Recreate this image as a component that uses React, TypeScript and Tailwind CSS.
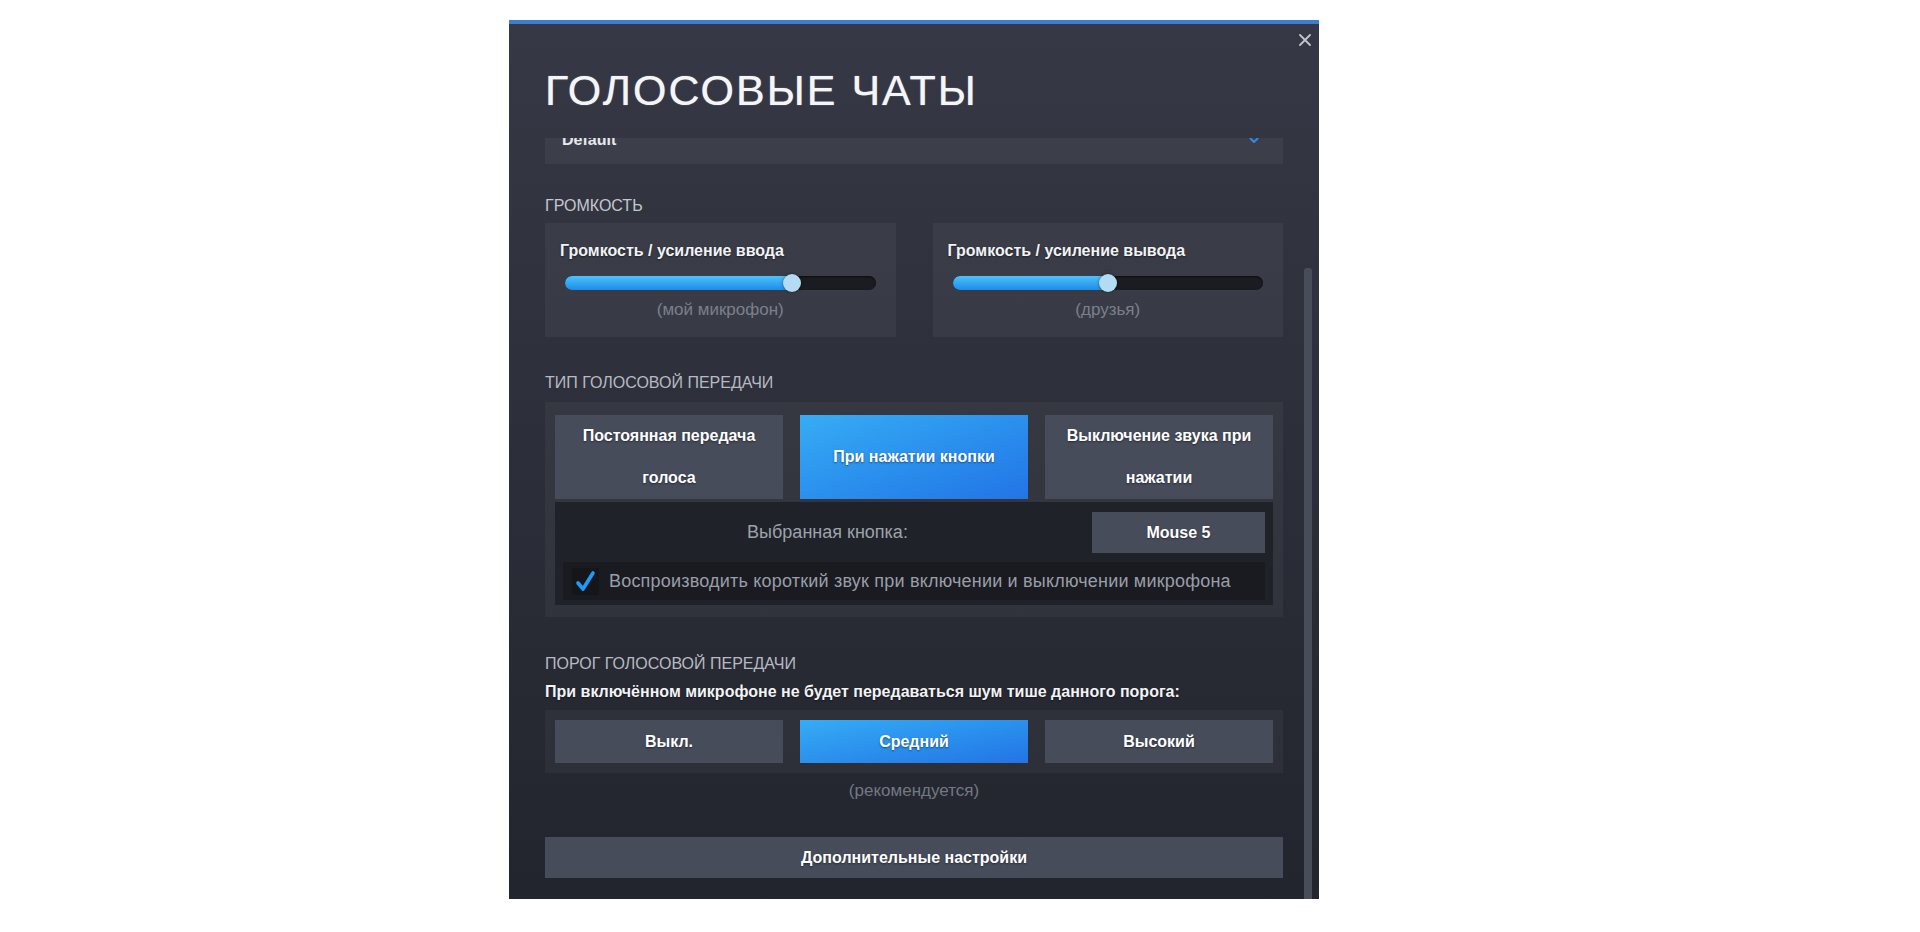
import React from "react";

const FONT = { fontFamily: '"Liberation Sans", Arial, sans-serif' };

function Slider({ value }: { value: number }) {
  return (
    <div className="relative mx-[5px] mt-[13px] h-[18px] flex items-center">
      <div className="relative h-[14px] w-full rounded-full bg-[#1a1c21] shadow-[inset_0_1px_2px_rgba(0,0,0,0.6)]">
        <div
          className="h-full rounded-full bg-linear-to-b from-[#4cc2fb] to-[#1f8be9]"
          style={{ width: `${value}%` }}
        />
      </div>
      <div
        className="absolute top-0 h-[18px] w-[18px] -translate-x-1/2 rounded-full bg-[#b3dbf4] shadow-[0_0_3px_rgba(0,0,0,0.5)]"
        style={{ left: `${value}%` }}
      />
    </div>
  );
}

function VolumeBox({ label, sub, value }: { label: string; sub: string; value: number }) {
  return (
    <div className="h-[114px] bg-[#ffffff0c] px-[15px] pt-[18px]">
      <div className="text-[16px] leading-[20px] font-bold text-[#f2f3f5] [text-shadow:0_1px_2px_rgba(0,0,0,0.5)]">{label}</div>
      <Slider value={value} />
      <div className="mt-[8px] text-center text-[17px] leading-[20px] text-[#7b808c]">{sub}</div>
    </div>
  );
}

function Btn({
  children,
  active,
  className,
}: {
  children: React.ReactNode;
  active?: boolean;
  className?: string;
}) {
  return (
    <div
      className={
        "flex items-center justify-center text-center font-bold text-[16px] text-white [text-shadow:0_1px_2px_rgba(0,0,0,0.45)] " +
        (active
          ? "bg-linear-to-br from-[#37acf4] to-[#2374e6] "
          : "bg-[#474c5b] ") +
        (className ?? "")
      }
    >
      {children}
    </div>
  );
}

export default function App() {
  return (
    <div className="w-[1920px] h-[932px] overflow-hidden bg-white" style={FONT}>
      <div className="relative ml-[509px] mt-[20px] h-[879px] w-[810px] overflow-hidden border-t-4 border-[#3b7fd3] bg-linear-to-b from-[#363945] to-[#22252d]">
        {/* close */}
        <div className="absolute right-[8px] top-[10px] h-[12px] w-[12px]">
          <svg viewBox="0 0 12 12" width="12" height="12">
            <path d="M1 1 L11 11 M11 1 L1 11" stroke="#c2c5cd" strokeWidth="1.8" strokeLinecap="round" />
          </svg>
        </div>
        {/* scrollbar */}
        <div className="absolute right-[7px] top-[244px] bottom-0 w-[8px] rounded-t-[3px] bg-[#484d5a]" />

        <div className="px-[36px] pt-[44px]">
          <div className="text-[43px] leading-[44px] tracking-[2px] text-[#f4f5f7] [text-shadow:0_0_1px_rgba(255,255,255,0.7)]">
            ГОЛОСОВЫЕ ЧАТЫ
          </div>
        </div>

        <div className="mt-[26px] h-[761px] overflow-hidden px-[36px]">
          <div className="-mt-[20px]">
            {/* dropdown */}
            <div className="relative flex h-[46px] items-start justify-between bg-[#ffffff0c] pl-[17px] pr-[24px]">
              <span className="text-[16px] leading-[43px] font-bold text-[#e8e9ec]">Default</span>
              <svg viewBox="0 0 10 6" width="10" height="6" className="mt-[19px]">
                <path d="M1 1 L5 5 L9 1" stroke="#2f8be8" strokeWidth="2" fill="none" />
              </svg>
            </div>

            <div className="mt-[32px] text-[16px] leading-[20px] text-[#c4c7ce]">ГРОМКОСТЬ</div>
            <div className="mt-[7px] grid grid-cols-2 gap-[37px]">
              <VolumeBox label="Громкость / усиление ввода" sub="(мой микрофон)" value={73} />
              <VolumeBox label="Громкость / усиление вывода" sub="(друзья)" value={50} />
            </div>

            <div className="mt-[36px] text-[16px] leading-[20px] text-[#b7bac2]">ТИП ГОЛОСОВОЙ ПЕРЕДАЧИ</div>
            <div className="mt-[9px] bg-[#ffffff0a] px-[10px] pt-[13px] pb-[12px]">
              <div className="grid h-[83px] grid-cols-3 gap-[17px]">
                <Btn className="leading-[42px]">
                  Постоянная передача
                  <br />
                  голоса
                </Btn>
                <Btn active className="leading-[42px]">
                  При нажатии кнопки
                </Btn>
                <Btn className="leading-[42px]">
                  Выключение звука при
                  <br />
                  нажатии
                </Btn>
              </div>
              <div className="mt-[4px] bg-[#1f2229] px-[8px] pt-[10px] pb-[5px]">
                <div className="flex h-[41px] items-center">
                  <div className="flex-1 text-center text-[18px] text-[#9ea2ab]">Выбранная кнопка:</div>
                  <Btn className="h-[41px] w-[173px]">Mouse 5</Btn>
                </div>
                <div className="mt-[9px] flex h-[38px] items-center bg-[#191b21] pl-[9px]">
                  <div className="flex h-[27px] w-[27px] items-center justify-center bg-[#14161a]">
                    <svg viewBox="0 0 27 27" width="27" height="27">
                      <path d="M6 15 L11 21 L21 5" stroke="#1d9bfb" strokeWidth="3.6" fill="none" strokeLinecap="round" strokeLinejoin="round" />
                    </svg>
                  </div>
                  <span className="ml-[10px] text-[18px] tracking-[0.2px] text-[#9a9ea8]">
                    Воспроизводить короткий звук при включении и выключении микрофона
                  </span>
                </div>
              </div>
            </div>

            <div className="mt-[37px] text-[16px] leading-[20px] text-[#b7bac2]">ПОРОГ ГОЛОСОВОЙ ПЕРЕДАЧИ</div>
            <div className="mt-[8px] text-[16px] leading-[20px] font-bold text-[#f2f3f5] [text-shadow:0_1px_2px_rgba(0,0,0,0.5)]">
              При включённом микрофоне не будет передаваться шум тише данного порога:
            </div>
            <div className="mt-[8px] bg-[#ffffff0a] p-[10px]">
              <div className="grid h-[43px] grid-cols-3 gap-[17px]">
                <Btn>Выкл.</Btn>
                <Btn active>Средний</Btn>
                <Btn>Высокий</Btn>
              </div>
            </div>
            <div className="mt-[8px] grid grid-cols-3 gap-[17px] px-[10px] text-[17px] leading-[20px] text-[#737884]">
              <div />
              <div className="text-center">(рекомендуется)</div>
              <div />
            </div>

            <Btn className="mt-[36px] h-[41px] w-full">Дополнительные настройки</Btn>
          </div>
        </div>
      </div>
    </div>
  );
}
